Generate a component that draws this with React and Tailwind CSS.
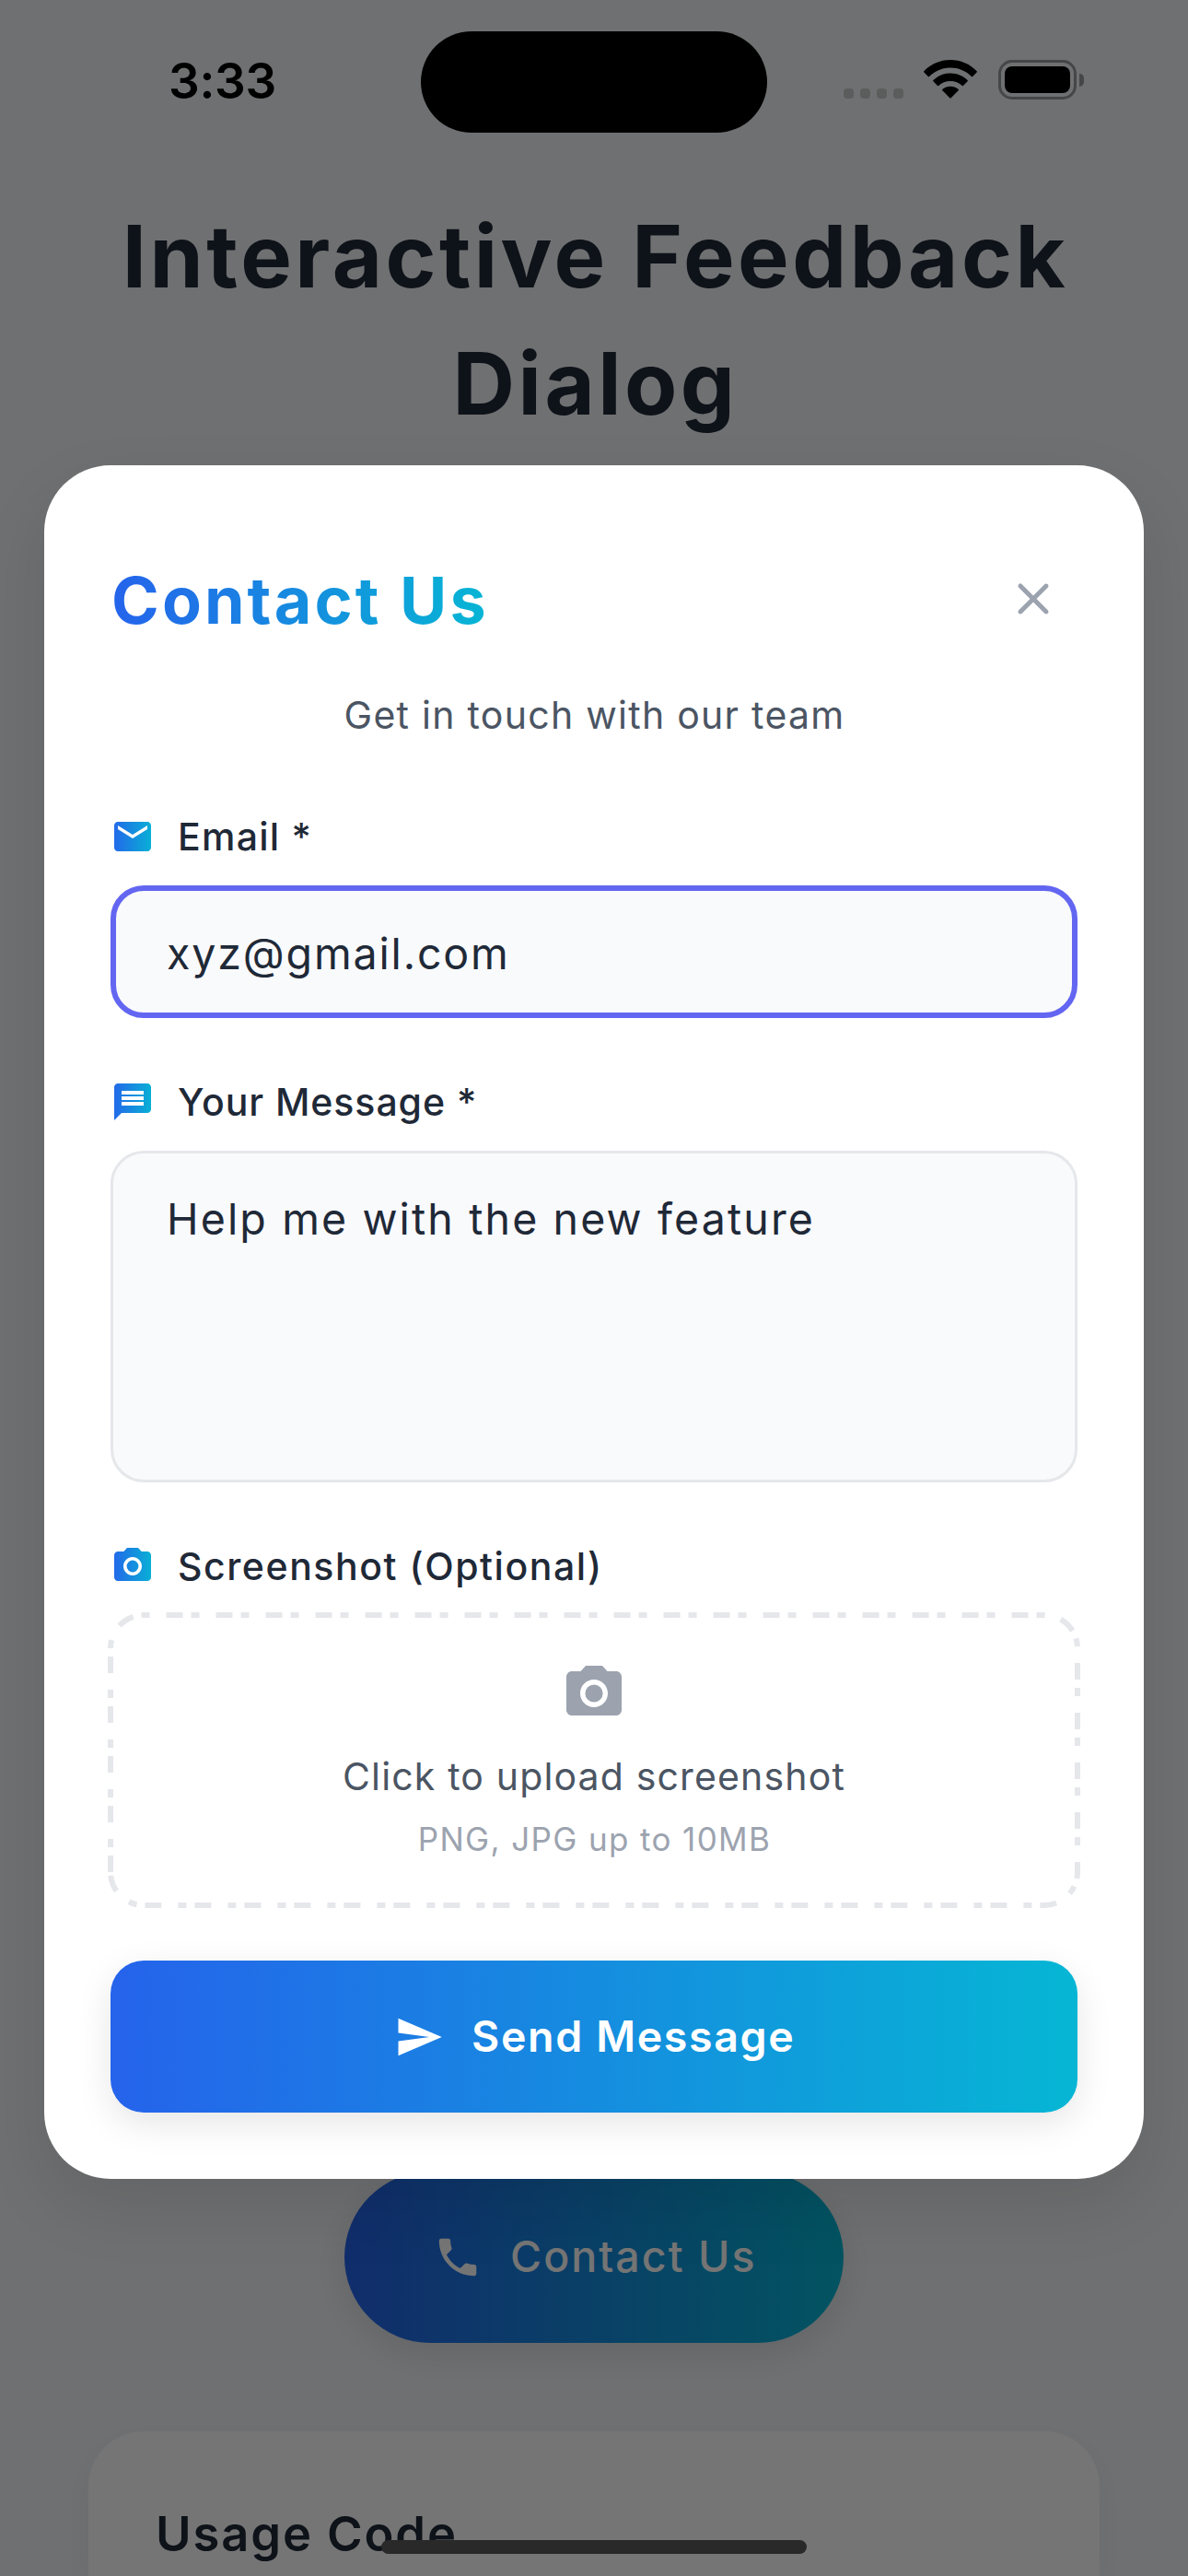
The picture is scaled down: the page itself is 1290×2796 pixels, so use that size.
const EMAIL =
  'M20 4H4c-1.1 0-1.99.9-1.99 2L2 18c0 1.1.9 2 2 2h16c1.1 0 2-.9 2-2V6c0-1.1-.9-2-2-2zm0 4l-8 5-8-5V6l8 5 8-5v2z';
const MESSAGE =
  'M20 2H4c-1.1 0-1.99.9-1.99 2L2 22l4-4h14c1.1 0 2-.9 2-2V4c0-1.1-.9-2-2-2zm-2 12H6v-2h12v2zm0-3H6V9h12v2zm0-3H6V6h12v2z';
const CAMERA =
  'M12 8.8a3.2 3.2 0 1 0 0 6.4a3.2 3.2 0 1 0 0-6.4zM9 2L7.17 4H4c-1.1 0-2 .9-2 2v12c0 1.1.9 2 2 2h16c1.1 0 2-.9 2-2V6c0-1.1-.9-2-2-2h-3.17L15 2H9zm3 15c-2.76 0-5-2.24-5-5s2.24-5 5-5 5 2.24 5 5-2.24 5-5 5z';
const SEND = 'M2.01 21L23 12 2.01 3 2 10l15 2-15 2z';
const PHONE =
  'M6.62 10.79c1.44 2.83 3.76 5.14 6.59 6.59l2.2-2.2c.27-.27.67-.36 1.02-.24 1.12.37 2.33.57 3.57.57.55 0 1 .45 1 1V20c0 .55-.45 1-1 1-9.39 0-17-7.61-17-17 0-.55.45-1 1-1h3.5c.55 0 1 .45 1 1 0 1.25.2 2.45.57 3.57.11.35.03.74-.25 1.02l-2.2 2.2z';
const CLOSE =
  'M18.3 5.71a.9959.9959 0 0 0-1.41 0L12 10.59 7.11 5.7a.9959.9959 0 0 0-1.41 0c-.39.39-.39 1.02 0 1.41L10.59 12 5.7 16.89c-.39.39-.39 1.02 0 1.41.39.39 1.02.39 1.41 0L12 13.41l4.89 4.89c.39.39 1.02.39 1.41 0 .39-.39.39-1.02 0-1.41L13.41 12l4.89-4.89c.38-.38.38-1.02 0-1.4z';

function Icon({ d, className }) {
  return (
    <svg viewBox="0 0 24 24" fill="currentColor" className={className}>
      <path d={d} />
    </svg>
  );
}

function GradientIcon({ id, d }) {
  return (
    <svg viewBox="0 0 24 24" className="size-12">
      <defs>
        <linearGradient id={id} gradientUnits="userSpaceOnUse" x1="0" y1="0" x2="24" y2="0">
          <stop offset="0" stopColor="#2563eb" />
          <stop offset="1" stopColor="#06b6d4" />
        </linearGradient>
      </defs>
      <path d={d} fill={`url(#${id})`} />
    </svg>
  );
}

function FieldLabel({ id, icon, children, className }) {
  return (
    <div className={`flex h-12 items-center gap-[25px] text-[41px] leading-12 font-medium text-[#1f2937] ${className}`}>
      <GradientIcon id={id} d={icon} />
      {children}
    </div>
  );
}

function StatusBar() {
  return (
    <div className="absolute inset-x-0 top-0 flex h-[177px] items-start text-black">
      <div className="ml-[183px] mt-[56px] w-[274px] text-[53px] leading-[64px] font-semibold tracking-[-0.3px]">3:33</div>
      <div className="mt-[33.5px] h-[110.7px] w-[376px] rounded-full bg-black" />
      <div className="mt-[96px] ml-[83px] flex gap-[7px]">
        <span className="size-[11px] rounded-[4px] bg-[#5b5d5d]" />
        <span className="size-[11px] rounded-[4px] bg-[#5b5d5d]" />
        <span className="size-[11px] rounded-[4px] bg-[#5b5d5d]" />
        <span className="size-[11px] rounded-[4px] bg-[#5b5d5d]" />
      </div>
      <svg viewBox="0 0 58 43" className="mt-[65px] ml-[22px] h-[43px] w-[58px]">
        <path d="M29 0C40 0 50 4.300 57.700 12.200Q58.200 12.800 57.600 13.400L53.200 17.900Q52.500 18.500 51.900 17.900C45.500 11.800 37.500 8.500 29 8.500S12.500 11.800 6.100 17.900Q5.500 18.500 4.800 17.900L.4 13.400Q-.2 12.800 .3 12.200C8 4.300 18 0 29 0Z" />
        <path d="M29 14.500C36 14.500 42.500 17.200 47.600 22Q48.200 22.700 47.600 23.300L43 28Q42.400 28.600 41.700 28C38.200 24.800 33.800 23 29 23S19.800 24.800 16.300 28Q15.600 28.600 15 28L10.400 23.300Q9.800 22.700 10.400 22C15.500 17.200 22 14.500 29 14.500Z" />
        <path d="M29 28.700C32.200 28.700 35.100 29.800 37.500 31.800Q38.200 32.500 37.600 33.200L29.700 41.300Q29 42 28.300 41.300L20.400 33.200Q19.800 32.500 20.500 31.800C22.900 29.800 25.800 28.700 29 28.700Z" />
      </svg>
      <div className="mt-[65px] ml-[23px] flex items-center gap-[3px]">
        <div className="h-[43px] w-[85px] rounded-[15px] border-[3px] border-[#454646] p-[4px]">
          <div className="size-full rounded-[8px] bg-black" />
        </div>
        <div className="h-[14px] w-[5px] rounded-r-full bg-[#454646]" />
      </div>
    </div>
  );
}

function Page() {
  return (
    <div className="flex h-full flex-col items-center bg-[#f2f4f7] pt-[209px]">
      <h1 className="h-[276px] w-[1098px] pl-[3px] text-center text-[93.5px] leading-[138px] font-bold tracking-[3.5px] text-[#1f2937]">
        Interactive Feedback
        <br />
        Dialog
      </h1>
      <button className="mt-[1872px] flex h-[186px] w-[542px] shrink-0 items-center gap-[30px] rounded-full bg-linear-to-r/srgb from-[#2563eb] to-[#06b6d4] pl-24 text-[46.5px] font-medium tracking-[2.04px] whitespace-nowrap text-white shadow-[0_12px_38px_rgba(0,0,0,0.1)]">
        <Icon d={PHONE} className="size-[54px]" />
        Contact Us
      </button>
      <section className="mt-[96px] h-[157px] w-[1098px] shrink-0 rounded-t-[60px] bg-white px-[73px] pt-[78px] shadow-[0_12px_38px_rgba(0,0,0,0.05)]">
        <h2 className="text-[52.5px] leading-[66px] font-semibold tracking-[1.87px] text-[#1f2937]">Usage Code</h2>
      </section>
    </div>
  );
}

function UploadBox() {
  return (
    <div className="relative mt-[29px] flex h-[315px] flex-col items-center pt-[48.4px]">
      <svg viewBox="0 0 1050 315" fill="none" className="absolute inset-0 size-full overflow-visible">
        <path
          d="M0 279V36A36 36 0 0 1 36 0H1014A36 36 0 0 1 1050 36V279A36 36 0 0 1 1014 315H36A36 36 0 0 1 0 279"
          stroke="#e5e7eb"
          strokeWidth="6"
          strokeDasharray="18 9 9 18"
        />
      </svg>
      <Icon d={CAMERA} className="size-[72px] text-[#9ca3af]" />
      <p className="mt-[24.6px] text-[41px] leading-[60px] tracking-[1.15px] text-[#4b5563]">Click to upload screenshot</p>
      <p className="mt-[14px] pl-px text-[35px] leading-[48px] tracking-[1.36px] text-[#9ca3af]">PNG, JPG up to 10MB</p>
    </div>
  );
}

function ContactDialog() {
  return (
    <div className="w-[1194px] rounded-[72px] bg-white p-[72px] shadow-[0_30px_72px_rgba(0,0,0,0.1)]">
      <div className="flex h-36 items-center justify-between">
        <h2 className="bg-linear-to-r/srgb from-[#2563eb] to-[#06b6d4] bg-clip-text pt-[5px] pl-px text-[70px] leading-[96px] font-bold tracking-[3.1px] text-transparent">
          Contact Us
        </h2>
        <button className="flex size-24 items-center justify-center pt-px text-[#9ca3af]">
          <Icon d={CLOSE} className="size-[60px]" />
        </button>
      </div>
      <p className="mt-[25px] pl-px text-center text-[41px] leading-[60px] tracking-[1.27px] text-[#4b5563]">
        Get in touch with our team
      </p>

      <FieldLabel id="g-email" icon={EMAIL} className="mt-[78px] tracking-[1.26px]">Email *</FieldLabel>
      <div className="mt-[29px] flex h-36 items-center rounded-[36px] border-[6px] border-[#6366f1] bg-[#f9fafc] px-[55px] pt-[5px] text-[46.5px] tracking-[1.85px] text-[#1f2937]">
        xyz@gmail.com
      </div>

      <FieldLabel id="g-message" icon={MESSAGE} className="mt-[67px] tracking-[0.95px]">Your Message *</FieldLabel>
      <div className="mt-[29px] h-[360px] rounded-[36px] border-[3px] border-[#e5e7eb] bg-[#f9fafc] px-[58px] pt-[37px] text-[46.5px] leading-[68px] tracking-[2.13px] text-[#1f2937]">
        Help me with the new feature
      </div>

      <FieldLabel id="g-screenshot" icon={CAMERA} className="mt-[67px] tracking-[1.55px]">Screenshot (Optional)</FieldLabel>
      <UploadBox />

      <button className="mt-[60px] flex h-[165px] w-full items-center gap-[30px] rounded-[36px] bg-linear-to-r/srgb from-[#2563eb] to-[#06b6d4] pl-[308px] text-[46.5px] font-semibold tracking-[1.65px] text-white shadow-[0_12px_38px_rgba(0,0,0,0.1)]">
        <Icon d={SEND} className="size-[54px]" />
        Send Message
      </button>
    </div>
  );
}

export default function App() {
  return (
    <main className="relative h-[2796px] w-[1290px] overflow-hidden font-['Inter',sans-serif]">
      <Page />
      <div className="absolute inset-0 flex flex-col items-center bg-black/54 pt-[505.33px]">
        <ContactDialog />
      </div>
      <StatusBar />
      <div className="absolute top-[2757px] left-[414px] h-[15px] w-[462px] rounded-full bg-[#292929]" />
    </main>
  );
}
